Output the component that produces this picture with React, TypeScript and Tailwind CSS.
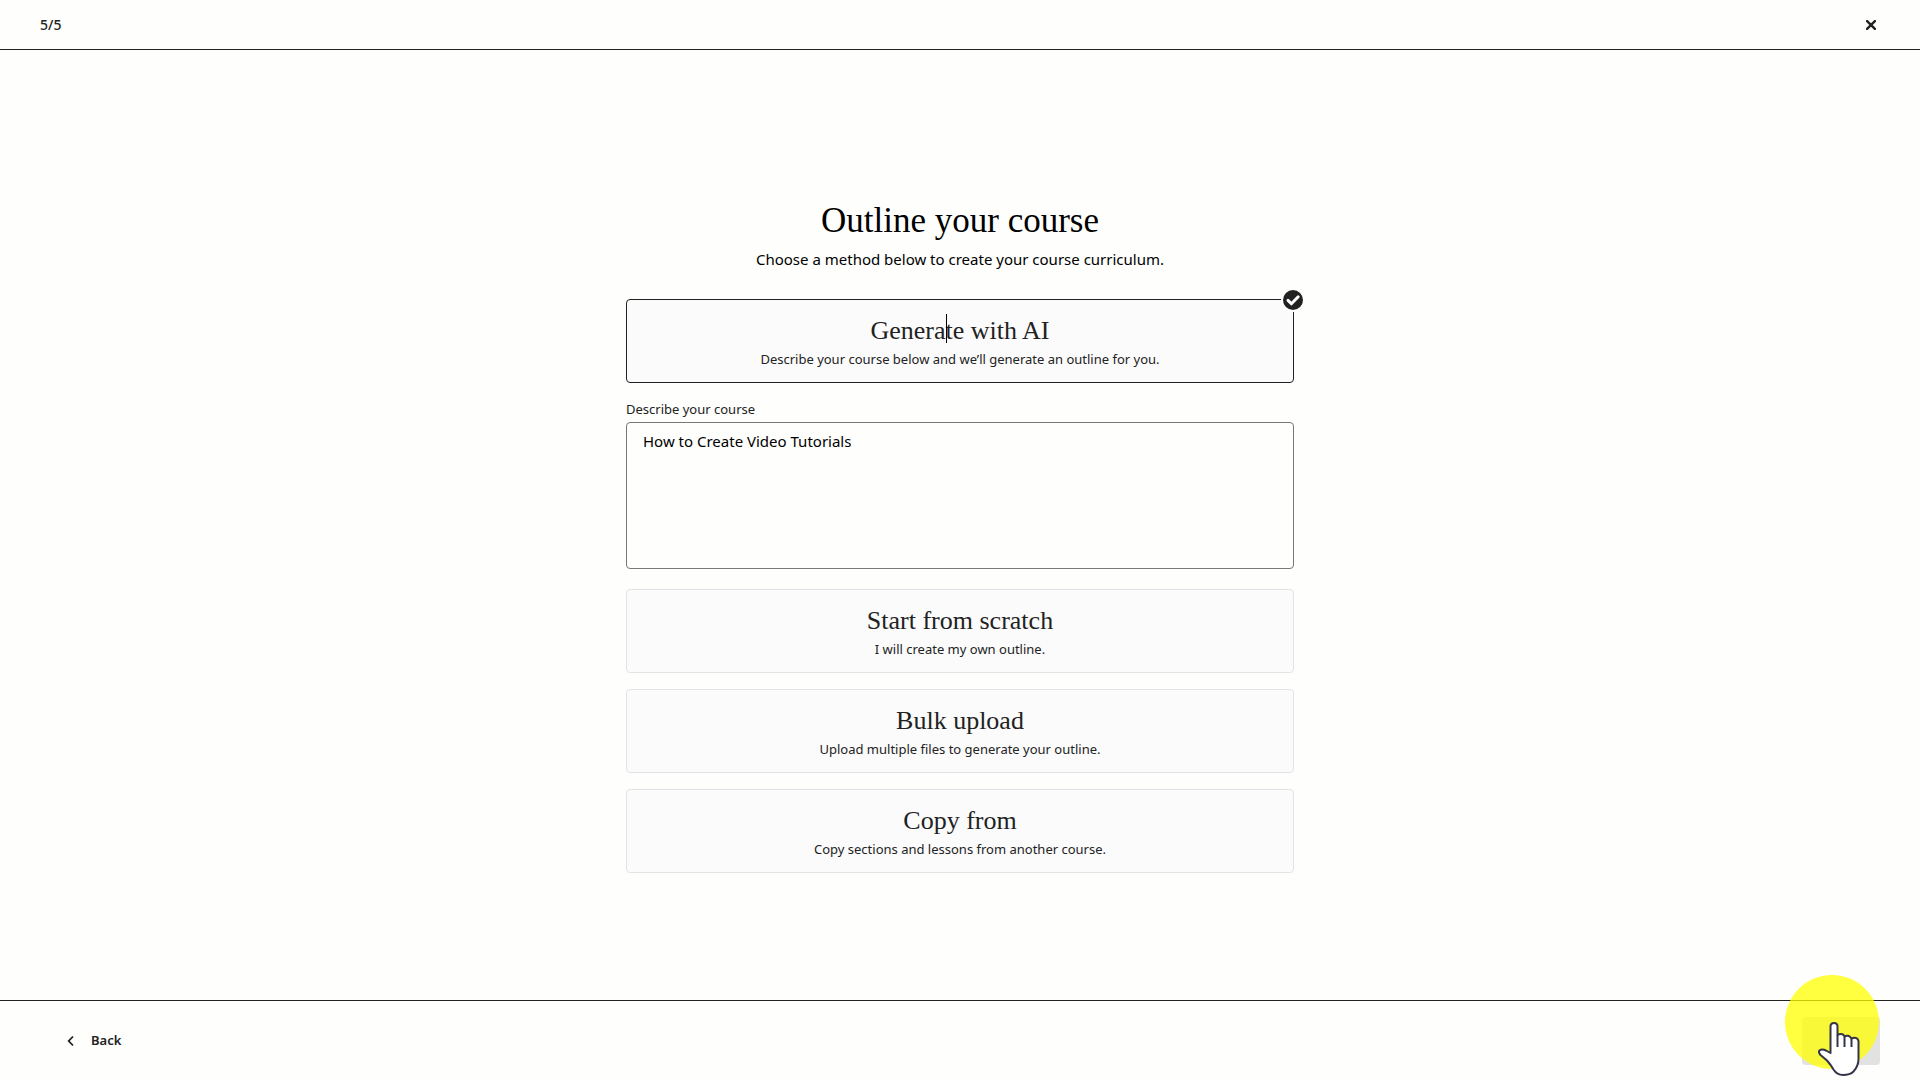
import React, { useState } from "react";

const otherMethods = [
  { id: "scratch", title: "Start from scratch", text: "I will create my own outline." },
  { id: "bulk", title: "Bulk upload", text: "Upload multiple files to generate your outline." },
  { id: "copy", title: "Copy from", text: "Copy sections and lessons from another course." },
];

type MethodCardProps = {
  title: string;
  text: string;
  selected: boolean;
  onSelect: () => void;
  children?: React.ReactNode;
};

function MethodCard({ title, text, selected, onSelect, children }: MethodCardProps) {
  return (
    <button
      type="button"
      aria-pressed={selected}
      onClick={onSelect}
      className={`relative block w-full rounded-sm border bg-[#fbfbfc] px-4 py-[13px] text-center cursor-pointer ${
        selected ? "border-[#222]" : "border-[#e3e3e5]"
      }`}
    >
      <span className="block font-['Liberation_Serif',serif] text-[26px] leading-9">
        {title}
      </span>
      <span className="block text-[13px] leading-5">{text}</span>
      {selected && (
        <svg
          viewBox="0 0 24 24"
          className="absolute -top-3 -right-3 size-6"
          aria-hidden="true"
        >
          <circle cx="12" cy="12" r="12" fill="#fefefd" />
          <circle cx="12" cy="12" r="10" fill="#222" />
          <path
            d="M7 12.400l3.400 3.400 6.800-7"
            fill="none"
            stroke="#fff"
            strokeWidth="3"
            strokeLinecap="round"
            strokeLinejoin="round"
          />
        </svg>
      )}
      {children}
    </button>
  );
}

export default function App() {
  const [method, setMethod] = useState<string>("ai");
  const [description, setDescription] = useState<string>("How to Create Video Tutorials");

  return (
    <div className="flex min-h-screen flex-col bg-[#fefefd] font-['Noto_Sans',sans-serif] text-[#222]">
      <header className="flex h-[50px] items-center justify-between border-b border-[#222] pr-[39px] pl-10">
        <p className="text-sm font-medium">5/5</p>
        <button type="button" aria-label="Close" className="flex size-5 items-center justify-center cursor-pointer">
          <svg viewBox="0 0 10 10" className="size-[10px]" aria-hidden="true">
            <path d="M1.100 1.100l7.800 7.800M8.900 1.100l-7.800 7.800" stroke="#222" strokeWidth="2.400" strokeLinecap="round" />
          </svg>
        </button>
      </header>

      <main className="flex flex-1 flex-col items-center justify-center px-4 pt-6">
        <h1 className="font-['Liberation_Serif',serif] text-[35px] leading-10 text-black">
          Outline your course
        </h1>
        <p className="mt-1.5 text-[15px] leading-6 text-black">
          Choose a method below to create your course curriculum.
        </p>
        <div className="mt-7 w-full max-w-[668px]">
          <MethodCard
            title="Generate with AI"
            text="Describe your course below and we’ll generate an outline for you."
            selected={method === "ai"}
            onSelect={() => setMethod("ai")}
          >
            <span className="absolute top-3.5 left-[319px] h-[29px] w-px bg-black" />
          </MethodCard>
          <label htmlFor="description" className="mt-4 mb-[3px] block text-[13px] leading-5">
            Describe your course
          </label>
          <textarea
            id="description"
            value={description}
            onChange={(e) => setDescription(e.target.value)}
            className="block h-[147px] w-full resize-none rounded-sm border border-[#777] bg-transparent px-4 py-1.5 text-[15px] leading-6 text-black outline-none"
          />
          <div className="mt-5 flex flex-col gap-4">
            {otherMethods.map((item) => (
              <MethodCard
                key={item.id}
                title={item.title}
                text={item.text}
                selected={method === item.id}
                onSelect={() => setMethod(item.id)}
              />
            ))}
          </div>
        </div>
      </main>

      <footer className="flex h-20 items-center justify-between border-t border-[#222] pr-10 pl-16">
        <button type="button" className="flex items-center gap-[14px] text-[13px] font-semibold cursor-pointer">
          <svg viewBox="0 0 13 12" className="h-3 w-[13px]" aria-hidden="true">
            <path d="M9 1.500L4.700 6 9 10.500" fill="none" stroke="#222" strokeWidth="1.800" />
          </svg>
          Back
        </button>
        <div className="relative">
          <button
            type="button"
            disabled
            aria-label="Next"
            className="block h-12 w-[78px] rounded-sm bg-[#e2e2e2]"
          />
          {/* click highlight and pointer */}
          <span className="absolute -top-[42px] -left-[17px] size-[94px] rounded-full bg-[#ffff00]/75" />
          <svg viewBox="0 0 42 56" className="absolute top-1 left-4 h-14 w-[42px]" aria-hidden="true">
            <path
              d="M12.500 32V5.500Q12.500 2 16 2T19.500 5.500V14Q20.500 13 23 13T26.500 15.500Q28 14.500 30 14.800T33.500 17.500Q36 16.500 38 17T40.500 20V38Q40.500 45 35.500 50.500 32 54 25 54 19 54 15.500 48.500 13 44 9 39.500L2.500 34Q0 31 1.500 29.500 4 27.500 8 29.500Z"
              fill="#fff"
              stroke="#35354a"
              strokeWidth="2"
              strokeLinejoin="round"
            />
            <path d="M19.500 14v12M26.500 15.500v10.500M33.500 17.500v8.500" stroke="#35354a" strokeWidth="2" />
          </svg>
        </div>
      </footer>
    </div>
  );
}
